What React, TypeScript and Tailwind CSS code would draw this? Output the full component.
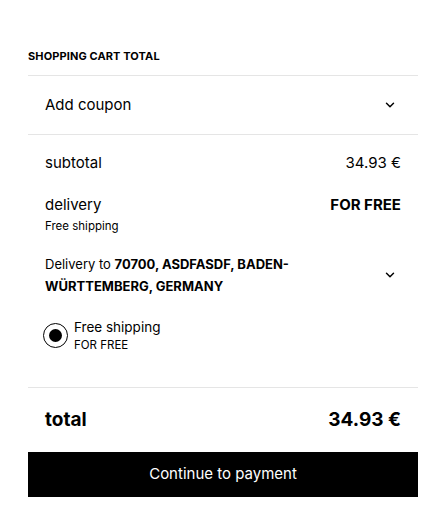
import { ChevronDown } from "lucide-react";

export default function App() {
  return (
    <div className="min-h-[520px] bg-white font-['Inter',sans-serif] text-black">
      <div className="ml-[28px] w-[390px] pt-[49px]">
        <h2 className="text-[11px] font-bold uppercase leading-[14px] tracking-[0.01em]">
          Shopping cart total
        </h2>

        <div className="mt-[12px] border-t border-[#e5e5e5]" />

        <button className="flex h-[58px] w-full items-center justify-between pl-[17px] pr-[21px] text-left">
          <span className="text-[15px] leading-[20px]">Add coupon</span>
          <ChevronDown className="h-[14px] w-[14px]" strokeWidth={2.5} />
        </button>

        <div className="border-t border-[#e5e5e5]" />

        <div className="px-[17px] pt-[18px]">
          <div className="flex items-center justify-between">
            <span className="text-[15px] leading-[20px]">subtotal</span>
            <span className="text-[15px] leading-[20px]">34.93 €</span>
          </div>

          <div className="mt-[22px] flex items-start justify-between">
            <div>
              <div className="text-[15px] leading-[20px]">delivery</div>
              <div className="mt-[4px] text-[11.5px] leading-[14px]">Free shipping</div>
            </div>
            <span className="text-[15px] font-bold leading-[20px]">FOR FREE</span>
          </div>

          <div className="mt-[20px] flex items-center justify-between">
            <p className="max-w-[270px] text-[13px] leading-[22px]">
              Delivery to <b className="font-bold">70700, ASDFASDF, BADEN-WÜRTTEMBERG, GERMANY</b>
            </p>
            <ChevronDown className="mr-[4px] h-[14px] w-[14px]" strokeWidth={2.5} />
          </div>

          <label className="mt-[21px] flex items-center gap-[6px]">
            <span className="-ml-[2px] flex h-[25px] w-[25px] items-center justify-center rounded-full border-[1.5px] border-black">
              <span className="h-[13px] w-[13px] rounded-full bg-black" />
            </span>
            <span className="flex flex-col">
              <span className="text-[13.5px] leading-[18px]">Free shipping</span>
              <span className="mt-[2px] text-[11.5px] leading-[14px]">FOR FREE</span>
            </span>
          </label>
        </div>

        <div className="mt-[35px] border-t border-[#e5e5e5]" />

        <div className="flex items-center justify-between px-[17px] pt-[20px]">
          <span className="text-[19px] font-bold leading-[24px]">total</span>
          <span className="text-[19px] font-bold leading-[24px]">34.93 €</span>
        </div>

        <button className="mt-[20px] flex h-[45px] w-full items-center justify-center bg-black text-[15px] text-white">
          Continue to payment
        </button>
      </div>
    </div>
  );
}
